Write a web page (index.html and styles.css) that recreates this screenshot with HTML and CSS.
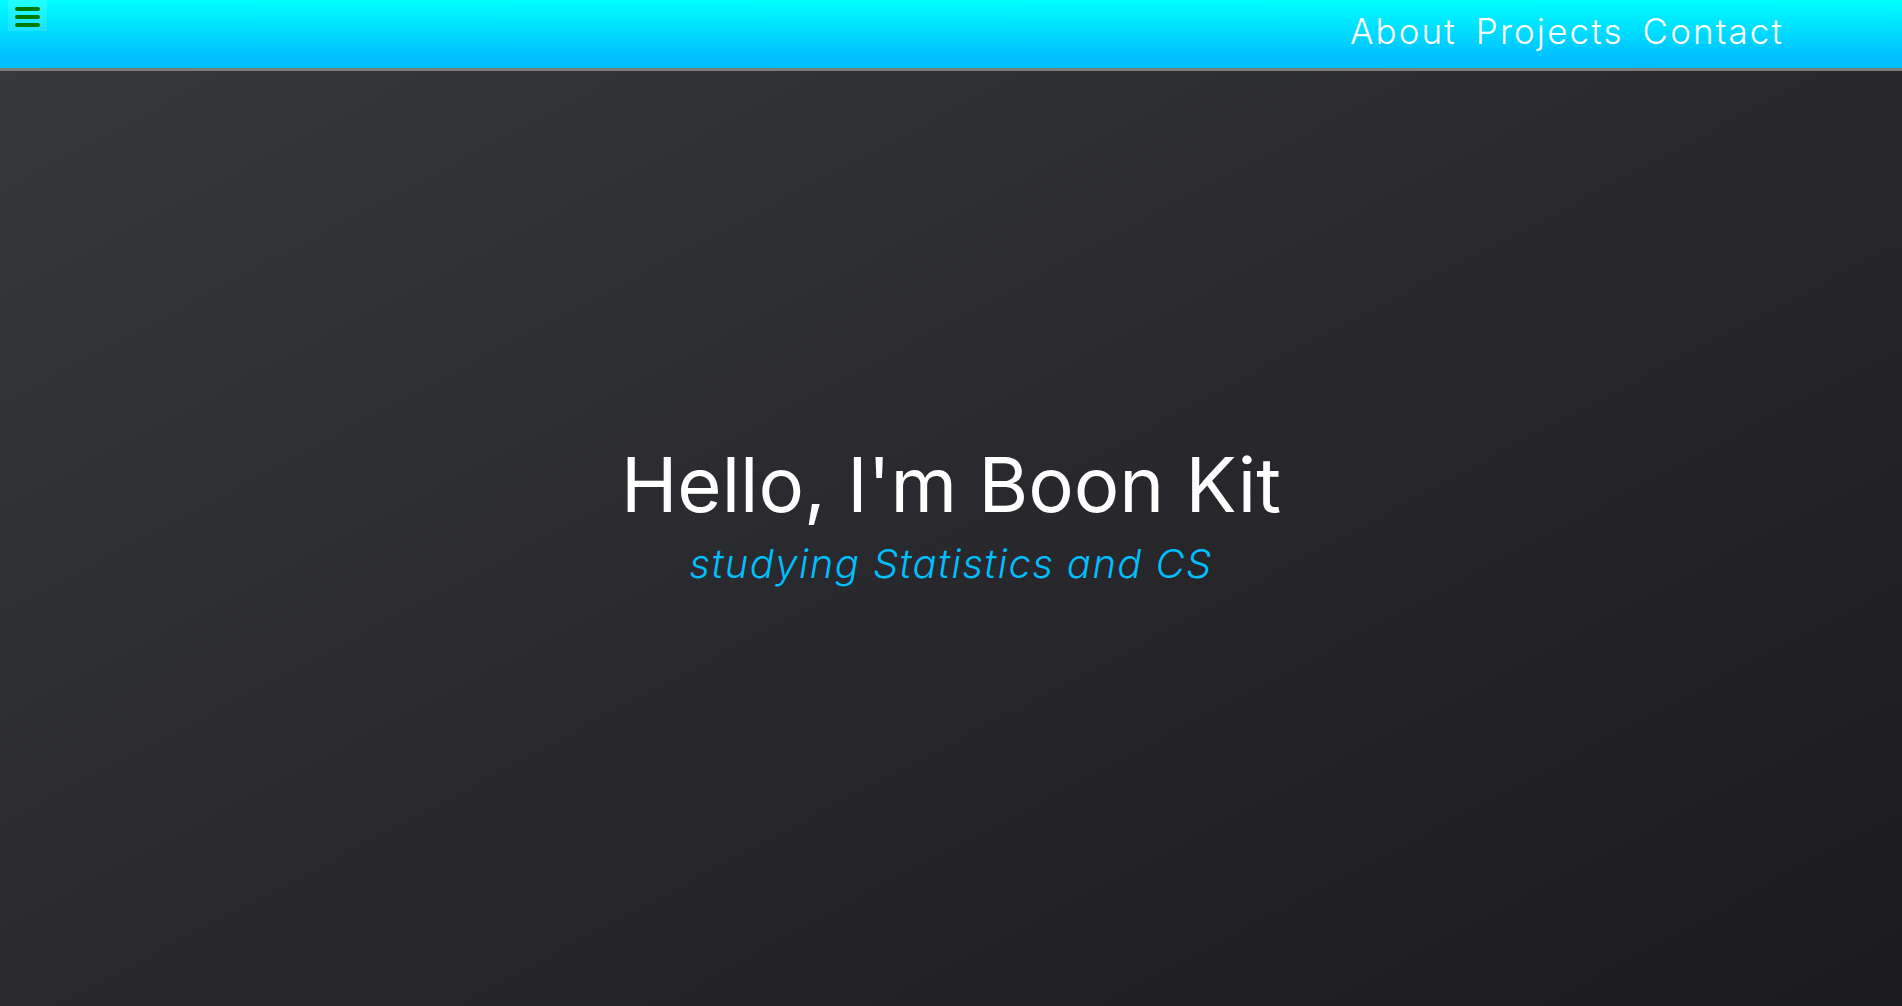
FILE: index.html
```html
<!DOCTYPE html>
<html lang="en">
<head>
<meta charset="utf-8">
<title>Boon Kit</title>
<link rel="stylesheet" href="styles.css">
</head>
<body>
<header class="topbar">
  <button class="menu-btn" aria-label="Menu">
    <span class="bar"></span>
    <span class="bar"></span>
    <span class="bar"></span>
  </button>
  <nav class="nav">
    <a href="#about">About</a>
    <a href="#projects">Projects</a>
    <a href="#contact">Contact</a>
  </nav>
</header>
<main class="hero">
  <h1 class="title">Hello, I'm Boon Kit</h1>
  <p class="subtitle">studying Statistics and CS</p>
</main>
</body>
</html>
```
FILE: styles.css
```css
* { box-sizing: border-box; }
html, body { margin: 0; padding: 0; height: 100%; }
body {
  font-family: "Inter", "Open Sans", sans-serif;
  background: linear-gradient(to bottom right, #37393d, #1b1a1d);
  color: #fff;
  display: flex;
  flex-direction: column;
  min-height: 100vh;
}
.topbar {
  height: 71px;
  flex: none;
  background: linear-gradient(#00ffff 0%, #00bfff 85%);
  border-bottom: 3px solid #7c7c7c;
  display: flex;
  align-items: flex-start;
  justify-content: space-between;
  padding: 0 118px 0 8px;
}
.menu-btn {
  width: 39px;
  height: 31px;
  border: none;
  padding: 7px 7px 4px;
  background: rgba(255,255,255,0.12);
  display: flex;
  flex-direction: column;
  justify-content: space-between;
  cursor: pointer;
}
.bar {
  display: block;
  height: 4px;
  width: 25px;
  border-radius: 2px;
  background: #007a00;
}
.nav {
  display: flex;
  gap: 19px;
  padding-top: 9px;
}
.nav a {
  color: #fff;
  text-decoration: none;
  font-size: 35px;
  font-weight: 300;
  letter-spacing: 2.1px;
  line-height: 44px;
}
.hero {
  flex: 1;
  display: flex;
  flex-direction: column;
  align-items: center;
  justify-content: center;
  padding-bottom: 46px;
}
.title {
  margin: 0;
  font-size: 76px;
  font-weight: 400;
  line-height: 1.1;
}
.subtitle {
  margin: 12px 0 0;
  font-size: 40px;
  font-weight: 300;
  font-style: italic;
  letter-spacing: 1.4px;
  color: #00bfff;
}
```
